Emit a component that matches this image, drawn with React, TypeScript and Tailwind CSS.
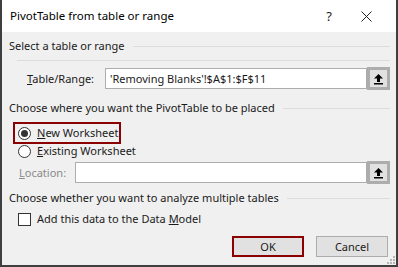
import { useState } from 'react'

function Radio({ checked }: { checked?: boolean }) {
  return (
    <span className="w-[13px] h-[13px] rounded-full border border-[#333] bg-white flex items-center justify-center shrink-0">
      {checked && <span className="w-[7px] h-[7px] rounded-full bg-[#333]" />}
    </span>
  )
}

function PickButton() {
  return (
    <div className="w-[23px] h-[23px] border-[3px] border-[#adadad] bg-[#e1e1e1] flex items-center justify-center -my-px shrink-0">
      <svg width="11" height="12" viewBox="0 0 11 12">
        <path d="M5.5 1 L10 5.5 L7 5.5 L7 9 L4 9 L4 5.5 L1 5.5 Z" fill="#000" />
        <rect x="1" y="10" width="9" height="1.5" fill="#000" />
      </svg>
    </div>
  )
}

function GroupLabel({ children }: { children: React.ReactNode }) {
  return (
    <div className="flex items-center gap-[8px] pl-[7px] pr-[6px] h-[16px]">
      <span className="whitespace-nowrap">{children}</span>
      <span className="flex-1 h-px bg-[#dcdcdc]" />
    </div>
  )
}

export default function App() {
  const [model, setModel] = useState(false)

  return (
    <div
      className="w-[398px] h-[267px] border-2 border-[#3f3f3f] border-t-0 bg-[#f0f0f0] text-[11px] leading-[16px] text-[#1a1a1a] relative select-none flex flex-col"
      style={{ fontFamily: '"Noto Sans", "Segoe UI", sans-serif' }}
    >
      <div className="h-[32px] bg-white flex items-center pl-[8px] shrink-0">
        <span className="text-[11.5px] text-black">PivotTable from table or range</span>
        <span className="ml-auto text-[13px] mr-[29px]">?</span>
        <svg width="11" height="11" viewBox="0 0 11 11" className="mr-[24px]">
          <path d="M0.5 0.5 L10.5 10.5 M10.5 0.5 L0.5 10.5" stroke="#222" strokeWidth="1" />
        </svg>
      </div>

      <div className="pt-[6px]">
        <GroupLabel>Select a table or range</GroupLabel>
        <div className="h-px bg-[#dcdcdc] ml-[15px] mr-[6px] mt-[6px]" />

        <div className="flex items-center mt-[7px] pl-[25px] pr-[6px] h-[21px]">
          <span className="w-[78px] shrink-0"><u>T</u>able/Range:</span>
          <div className="flex-1 h-[21px] bg-white border border-[#adadad] flex items-center pl-[4px] whitespace-nowrap">
            'Removing Blanks'!$A$1:$F$11
          </div>
          <PickButton />
        </div>

        <div className="mt-[11px]">
          <GroupLabel>Choose where you want the PivotTable to be placed</GroupLabel>
        </div>

        <div className="mt-[6px] ml-[11px] w-[108px] h-[22px] border-2 border-[#8b0000] flex items-center gap-[6px] pl-[3px] whitespace-nowrap">
          <Radio checked />
          <span><u>N</u>ew Worksheet</span>
        </div>
        <div className="ml-[16px] h-[14px] flex items-center gap-[6px] whitespace-nowrap">
          <Radio />
          <span><u>E</u>xisting Worksheet</span>
        </div>

        <div className="flex items-center mt-[4px] pl-[17px] pr-[6px] h-[21px]">
          <span className="w-[56px] shrink-0 text-[#8a8a8a]"><u>L</u>ocation:</span>
          <div className="flex-1 h-[21px] bg-white border border-[#adadad]" />
          <PickButton />
        </div>

        <div className="mt-[7px]">
          <GroupLabel>Choose whether you want to analyze multiple tables</GroupLabel>
        </div>

        <label className="mt-[5px] ml-[16px] h-[16px] flex items-center gap-[6px]" onClick={() => setModel(!model)}>
          <span className="w-[13px] h-[13px] border border-[#333] bg-white shrink-0" />
          <span>Add this data to the Data <u>M</u>odel</span>
        </label>

        <div className="flex justify-end gap-[12px] mt-[9px] pr-[8px]">
          <button className="w-[72px] h-[21px] border-2 border-[#8b0000] bg-[#e1e1e1] leading-none">OK</button>
          <button className="w-[72px] h-[21px] border border-[#adadad] bg-[#e1e1e1] leading-none">Cancel</button>
        </div>
      </div>

      <svg width="8" height="8" viewBox="0 0 8 8" className="absolute right-[1px] bottom-[1px]">
        <rect x="6" y="0" width="2" height="2" fill="#b5b5b5" />
        <rect x="3" y="3" width="2" height="2" fill="#b5b5b5" />
        <rect x="6" y="3" width="2" height="2" fill="#b5b5b5" />
        <rect x="0" y="6" width="2" height="2" fill="#b5b5b5" />
        <rect x="3" y="6" width="2" height="2" fill="#b5b5b5" />
        <rect x="6" y="6" width="2" height="2" fill="#b5b5b5" />
      </svg>
    </div>
  )
}
